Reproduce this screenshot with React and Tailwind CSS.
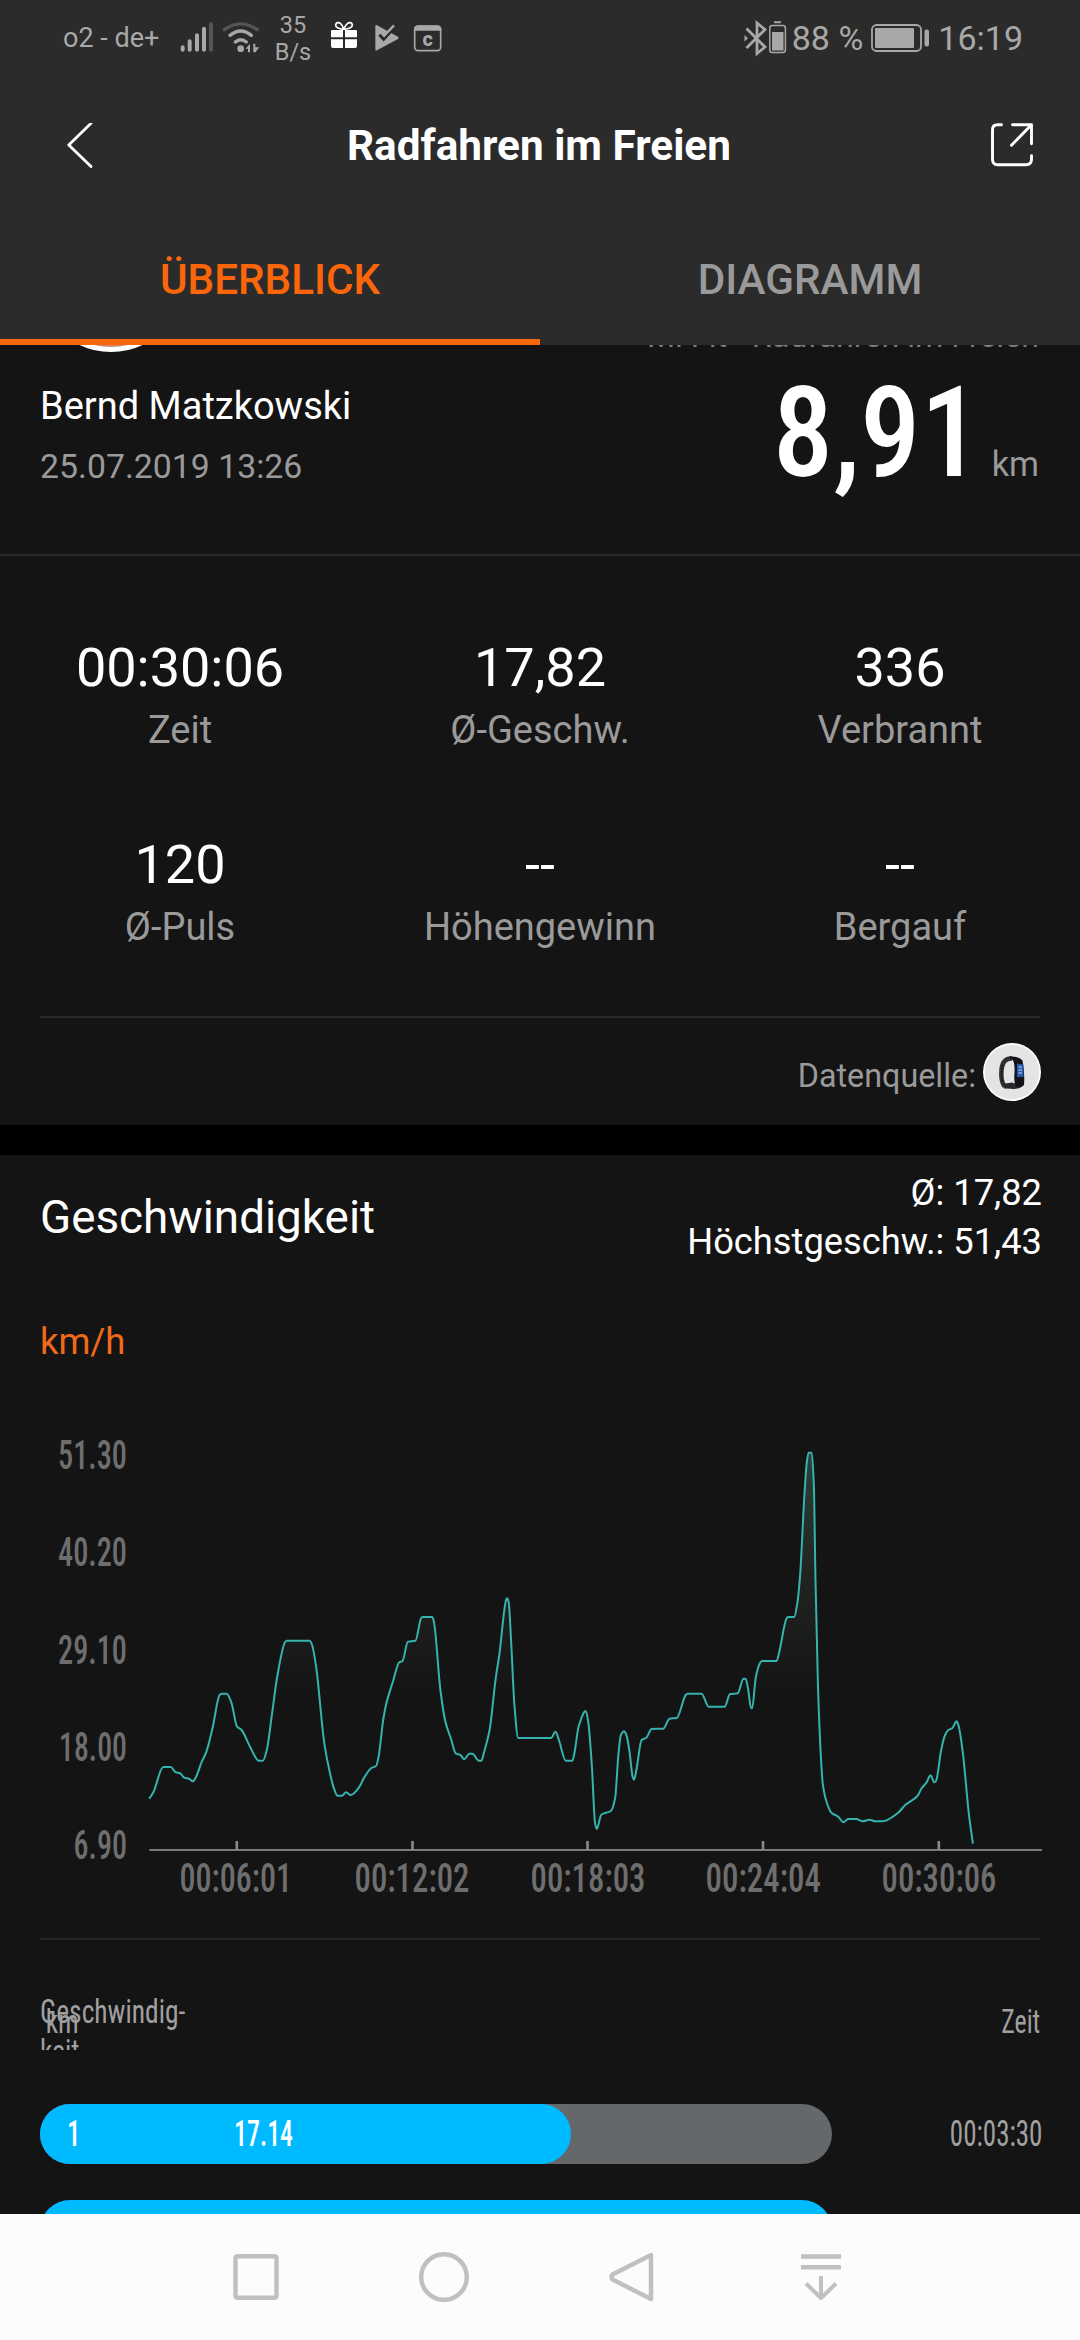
import React from "react";

const GREY = "#a8a8a8";

const SPEED_POINTS = [
  [149.3, 398.7], [153.6, 391.7], [163.2, 367], [170.7, 367], [175.7, 372.3], [180, 373.3], [184.3, 377.7], [188.9, 378.7],
  [192.9, 381.3], [195.4, 378.3], [201.8, 361.7], [206.4, 351.7], [212.5, 328.3], [219.6, 295], [221.4, 293.7], [226.8, 293.7],
  [231.4, 302.7], [237.1, 326.7], [241.4, 329.7], [250, 346.7], [258.9, 360.7], [262.9, 360.7], [266.8, 350], [272.1, 313.3],
  [277.5, 275], [285, 242.3], [286.8, 240.7], [309.6, 240.7], [312.1, 245], [316.1, 266.7], [324.3, 343.3], [329.3, 370],
  [333.9, 388.3], [337.5, 395.7], [341.8, 395.7], [346.1, 392.3], [350.7, 395], [358.9, 387.7], [364.3, 377.3], [371.4, 368],
  [376.1, 366], [378.6, 356.7], [383.2, 320], [386.4, 303.3], [392.9, 281.7], [399.3, 262.3], [402.5, 261], [407.9, 241.7],
  [415.4, 240.7], [421.1, 218.3], [422.5, 217], [432.1, 217], [433.9, 221.7], [440.4, 290], [445.4, 321.7], [451.1, 339.3],
  [455.7, 353.3], [460.4, 355], [464.3, 359.3], [469.3, 353.7], [472.5, 353.7], [478.9, 360.7], [481.4, 360.7], [483.9, 352.7],
  [489.6, 330], [495.7, 278.3], [499.3, 255], [506.1, 200], [507.1, 198.3], [508.6, 201.7], [511.4, 246.7], [514.3, 303.3],
  [518.2, 338], [551, 338], [555.5, 331.7], [558.9, 340], [565.8, 360.7], [572.4, 360.7], [574.4, 353.3], [578.6, 326.7],
  [585.8, 311], [588.2, 321.7], [591.7, 363.3], [595.1, 423.3], [596.8, 429], [601.3, 414.7], [610.9, 411], [615.1, 398.3],
  [618.5, 353.3], [620.9, 335], [624, 331.3], [626.4, 335], [629.5, 351.7], [632.6, 376.7], [634, 379.7], [636.4, 370],
  [641.6, 340], [646.4, 337.7], [651.6, 329], [663.3, 328.7], [669.5, 318.7], [676.7, 318], [685.7, 295], [687.4, 293.7],
  [701.5, 293.7], [708.7, 306.7], [724.6, 306.7], [730.1, 294], [737.7, 293.3], [743.5, 278.7], [745.6, 278.7], [748, 288.3],
  [751.1, 308.3], [752.1, 308.3], [755.9, 276.7], [760.4, 262.3], [762.1, 261], [776.6, 261], [779.3, 251.7], [786.6, 218.3],
  [788, 217], [794.2, 217], [797.3, 203.3], [800, 176.7], [804.5, 93.3], [806.9, 61.7], [808.6, 52.7], [811.7, 52.7],
  [813.8, 83.3], [815.5, 180], [817.9, 283.3], [820.7, 353.3], [822.7, 383.3], [826.5, 401.7], [831.4, 412.7], [838.2, 416.7],
  [843.4, 422.3], [848.2, 419], [856.1, 419], [862.7, 421.3], [869.6, 419.7], [875.1, 421.3], [882.7, 421.3], [898.2, 412.7],
  [905, 405.3], [917.5, 396], [921.6, 388.3], [926.4, 382.7], [930.5, 375.3], [934.3, 382.3], [936, 381], [941.2, 350],
  [944.7, 336], [948.4, 330], [952.2, 328.3], [956.7, 321.3], [958.8, 326.7], [962.9, 353.3], [968.8, 413.3], [972.9, 443.7],
];

// Monotone cubic interpolation through the samples.
function smoothPath(p) {
  const n = p.length;
  const s = [];
  for (let i = 0; i < n - 1; i++) s.push((p[i + 1][1] - p[i][1]) / (p[i + 1][0] - p[i][0]));
  const m = p.map((_, i) => {
    if (i === 0) return s[0];
    if (i === n - 1) return s[n - 2];
    if (s[i - 1] * s[i] <= 0) return 0;
    return (2 * s[i - 1] * s[i]) / (s[i - 1] + s[i]);
  });
  let d = `M${p[0][0]} ${p[0][1]}`;
  for (let i = 0; i < n - 1; i++) {
    const h = (p[i + 1][0] - p[i][0]) / 3;
    d += `C${p[i][0] + h} ${p[i][1] + m[i] * h} ${p[i + 1][0] - h} ${p[i + 1][1] - m[i + 1] * h} ${p[i + 1][0]} ${p[i + 1][1]}`;
  }
  return d;
}

const Y_LABELS = [["51.30", 69, 59], ["40.20", 165.7, 59], ["29.10", 264, 59], ["18.00", 360.7, 60], ["6.90", 459, 74.5]];
const X_TICKS = [
  ["00:06:01", 236.8, 180.5, 110.5],
  ["00:12:02", 412.5, 355.5, 113],
  ["00:18:03", 587.5, 531.5, 113],
  ["00:24:04", 763, 706.5, 113.5],
  ["00:30:06", 938.8, 882.5, 113],
];

function SpeedChart() {
  const line = smoothPath(SPEED_POINTS);
  return (
    <svg className="block h-[520px] w-[1080px] shrink-0" viewBox="0 0 1080 520">
      <defs>
        <linearGradient id="speedFill" gradientUnits="userSpaceOnUse" x1="0" y1="50" x2="0" y2="300">
          <stop offset="0" stopColor="#4f8f80" stopOpacity="0.38" />
          <stop offset="0.5" stopColor="#5a7060" stopOpacity="0.18" />
          <stop offset="1" stopColor="#5a6058" stopOpacity="0" />
        </linearGradient>
      </defs>
      <path d={`${line}L972.9 449L149.3 449Z`} fill="url(#speedFill)" />
      <path d={line} fill="none" stroke="#35b3ae" strokeWidth="2" strokeLinejoin="round" />
      <path d="M149.3 450H1042" stroke="#7a7a7a" strokeWidth="2" />
      {X_TICKS.map(([t, x]) => (
        <path key={t} d={`M${x} 441V450`} stroke="#8a8a8a" strokeWidth="2.6" />
      ))}
      <g fill="#6e6e6e" fontSize="41" className="font-[Roboto,sans-serif] font-medium [font-stretch:75%]">
        {Y_LABELS.map(([t, y, x]) => (
          <text key={t} x={x - 1} y={y} textLength={128 - x} lengthAdjust="spacingAndGlyphs">{t}</text>
        ))}
        {X_TICKS.map(([t, , x, w]) => (
          <text key={t} x={x - 1} y="491.5" textLength={w + 2} lengthAdjust="spacingAndGlyphs">{t}</text>
        ))}
      </g>
    </svg>
  );
}

function StatusBar() {
  return (
    <div className="flex h-[76px] items-center pl-[63px] text-[#a8a8a8]">
      <span className="w-[107px] whitespace-nowrap text-[27px]">o2 - de+</span>
      <svg className="h-[60px] w-[90px] shrink-0" viewBox="0 0 270 180" transform="translate(0 2)">
        <g stroke={GREY} strokeWidth="12" strokeLinecap="round">
          <path d="M38 112V119M59 94V119M81 76V119M102 56V119" />
          <path d="M123 42V119" stroke="#555" />
        </g>
        <g fill="none" strokeWidth="10" strokeLinecap="round">
          <path d="M163 59Q212 24 262 59" stroke="#555" />
          <path d="M180 76Q212 50 244 76M196 96Q212 82 229 96" stroke={GREY} />
        </g>
        <circle cx="212" cy="116" r="10" fill={GREY} />
        <path d="M227 116L240 101V127H234V116ZM250 101V127H256L268 112L256 112V101Z" fill={GREY} />
      </svg>
      <div className="w-[66px] pt-px text-center text-[23.5px] leading-[27px]">
        <div>35</div>
        <div>B/s</div>
      </div>
      <svg className="h-[60px] w-[120px] shrink-0" viewBox="468 0 360 180" transform="translate(0 2)">
        <g fill="#fff">
          <path d="M483 64q0-4 4-4H519V82H483ZM525 60H557q4 0 4 4V82H525ZM483 88H519V114H489q-6 0-6-6ZM525 88H561V108q0 6-6 6H525Z" />
          <path d="M521 58Q496 56 497 44Q501 34 511 40Q519 46 521 58Q525 46 533 40Q543 34 547 44Q548 56 521 58" fill="none" stroke="#fff" strokeWidth="5" />
        </g>
        <path d="M616 48Q616 44 621 46L684 80Q688 84 684 87L621 121Q616 124 616 118Z" fill={GREY} />
        <path d="M628 74L641 88L668 58" fill="none" stroke="#2b2b2b" strokeWidth="9" />
        <path d="M640 80L672 46" stroke={GREY} strokeWidth="7" />
        <rect x="734" y="49" width="78" height="73" rx="10" fill="none" stroke={GREY} strokeWidth="5" />
        <path d="M732 62V56Q734 46 744 46H802Q812 46 814 56V62Z" fill={GREY} />
        <text x="773" y="107" textAnchor="middle" fontSize="60" fontWeight="800" fill={GREY} className="font-[Roboto,sans-serif]">c</text>
      </svg>
      <svg className="ml-auto h-[40px] w-[50px] shrink-0" viewBox="0 0 50 40">
        <path d="M5.5 10.5L24 29L16 35.5V5L24 11.5L5.5 30" fill="none" stroke={GREY} strokeWidth="2.8" />
        <path d="M3.5 17L7 20.3L3.5 23.5Z" fill={GREY} />
        <rect x="28.8" y="7.6" width="15.6" height="27" rx="2.5" fill="none" stroke={GREY} strokeWidth="1.5" />
        <path d="M33 4.2H40" stroke={GREY} strokeWidth="2" />
        <path d="M31 14H42.5V32.5H31Z" fill={GREY} />
      </svg>
      <span className="ml-[1px] whitespace-nowrap text-[34px] leading-[76px]">88 %</span>
      <svg className="ml-[6px] h-[30px] w-[62px] shrink-0" viewBox="0 0 62 30">
        <rect x="3" y="2" width="49" height="26" rx="4.5" fill="none" stroke={GREY} strokeWidth="1.8" />
        <rect x="6" y="5" width="39" height="20" rx="1" fill={GREY} />
        <rect x="55.5" y="6.5" width="4.5" height="17" rx="2" fill={GREY} />
      </svg>
      <span className="mr-[57px] ml-[7px] whitespace-nowrap text-[34px] leading-[76px]">16:19</span>
    </div>
  );
}

function Header() {
  return (
    <header className="h-[345px] shrink-0 bg-[#2b2b2b]">
      <StatusBar />
      <div className="flex h-[140px] items-center pr-[45px] pl-[66px]">
        <svg className="h-[46px] w-[44px]" viewBox="0 0 44 46">
          <path d="M25 0.3L2.8 22.1L25 43.6" fill="none" stroke="#fff" strokeWidth="2.8" strokeLinecap="round" strokeLinejoin="round" />
        </svg>
        <h1 className="ml-[237px] text-[42.3px] font-bold whitespace-nowrap text-white">Radfahren im Freien</h1>
        <svg className="ml-auto h-[46px] w-[44px]" viewBox="0 0 44 46">
          <path d="M10.5 1.7H6.5Q1.5 1.7 1.5 6.7V36.2Q1.5 41.7 6.5 41.7H35Q40.5 41.7 40.5 36.2V32.7M21.5 1.7H40.5V20.7M40 2.2L20.5 22.2" fill="none" stroke="#fff" strokeWidth="2.9" strokeLinecap="round" strokeLinejoin="round" />
        </svg>
      </div>
      <div className="grid h-[129px] grid-cols-2 text-center text-[42.2px] leading-[119px] font-medium">
        <div className="border-b-[6px] border-[#fb660b] pt-1 text-[#fb660b]">ÜBERBLICK</div>
        <div className="pt-1 text-[#9a9a9a]">DIAGRAMM</div>
      </div>
    </header>
  );
}

function Summary() {
  return (
    <section className="relative flex h-[211px] shrink-0 justify-between overflow-hidden border-b-2 border-[#292929] pr-[41px] pl-[40px]">
      <div className="absolute top-[-137px] left-[39px] size-[144px] rounded-full border-[5px] border-white bg-[#c98a78]" />
      <div className="absolute top-[-28px] right-[41px] text-[32.2px] leading-[38px] whitespace-nowrap text-[#7c7c7c]">Mi Fit - Radfahren im Freien</div>
      <div className="pt-[31px]">
        <div className="text-[38px] leading-[60px] text-white">Bernd Matzkowski</div>
        <div className="mt-[1px] text-[33.8px] leading-[60px] text-[#9a9a9a]">25.07.2019 13:26</div>
      </div>
      <div className="flex items-baseline pt-[18px] whitespace-nowrap">
        <span className="origin-right scale-x-[0.96] text-[126px] leading-[140px] font-medium text-white [font-stretch:75%]">8,91</span>
        <span className="ml-[11px] text-[34.2px] text-[#9a9a9a]">km</span>
      </div>
    </section>
  );
}

const STATS = [
  ["00:30:06", "Zeit"],
  ["17,82", "Ø-Geschw."],
  ["336", "Verbrannt"],
  ["120", "Ø-Puls"],
  ["--", "Höhengewinn"],
  ["--", "Bergauf"],
];

function Stats() {
  return (
    <section className="h-[569px] shrink-0 pt-[82px]">
      <div className="grid grid-cols-3 text-center">
        {STATS.map(([value, label]) => (
          <div key={label} className="h-[197px]">
            <div className="text-[54px] leading-[60px] text-white">{value}</div>
            <div className="mt-[7px] text-[38px] leading-[50px] text-[#9a9a9a]">{label}</div>
          </div>
        ))}
      </div>
      <div className="mx-[40px] mt-[-16px] flex h-[109px] items-center justify-end border-t-2 border-[#292929]">
        <span className="mt-[9px] mr-[7px] text-[32.3px] text-[#9a9a9a]">Datenquelle:</span>
        <svg className="-mr-px size-[58px]" viewBox="0 0 58 58">
          <circle cx="29" cy="29" r="29" fill="#fff" />
          <circle cx="29" cy="29" r="27.3" fill="#e4e4e4" />
          <path d="M29 15.5Q19.5 15 18.5 27Q17.5 38 21.5 43.5" fill="none" stroke="#2d2f31" strokeWidth="4.5" />
          <path d="M19.5 41L29 39.5L36 42L39.5 43.5Q35 46.8 28 45.8L21 45.5Z" fill="#26282a" />
          <path d="M26 13.5Q36 13 39.5 17.5Q42 30 41 42Q38 45 33.5 44Q30.5 40 31.5 30Q32 21 30 17.5Z" fill="#121417" />
          <path d="M34 20.5L40.3 21.5Q41 28 40.4 34L34 34Z" fill="#2a58a8" />
          <path d="M35.5 24H39M35.5 27H39M35.5 30H39" stroke="#7db4ec" strokeWidth="1.3" />
          <path d="M19.5 22Q18 30 19.5 38" stroke="#0e0e0e" strokeWidth="1.2" strokeDasharray="1.5 1.5" fill="none" />
        </svg>
      </div>
    </section>
  );
}

function SpeedSection() {
  return (
    <section className="shrink-0">
      <div className="flex h-[135px] justify-between pr-[38px] pl-[40px] whitespace-nowrap text-white">
        <h2 className="pt-[33px] text-[45.8px] leading-[60px]">Geschwindigkeit</h2>
        <div className="pt-[13px] text-right text-[36.3px] leading-[49px]">
          <div>Ø: 17,82</div>
          <div>Höchstgeschw.: 51,43</div>
        </div>
      </div>
      <div className="h-[110px] pt-[26.5px] pl-[40px] text-[36.4px] leading-[50px] text-[#f06a1a]">km/h</div>
      <SpeedChart />
    </section>
  );
}

function Laps() {
  return (
    <section className="mt-[18px] h-[276px] shrink-0 overflow-hidden px-[40px] text-[34px] text-[#a0a0a0] [font-stretch:75%]">
      <div className="h-[2px] bg-[#262626]" />
      <div className="mt-[51px] flex h-[59px] justify-between overflow-hidden">
        <div className="relative w-[200px] origin-left scale-x-[0.808] leading-[40px]">
          <div>Geschwindig-<br />keit</div>
          <div className="absolute top-[10px] left-[7px]">km</div>
        </div>
        <div className="origin-right scale-x-[0.76] pt-[9.5px] leading-[40px]">Zeit</div>
      </div>
      <div className="mt-[54px] flex h-[60px] items-center justify-between">
        <div className="h-[60px] w-[792px] rounded-full bg-[#65686b]">
          <div className="flex h-[60px] w-[531px] items-center rounded-full bg-[#00baff] text-[36px] leading-[62px] font-medium text-white">
            <span className="ml-[27px] w-[167px] origin-left scale-x-[0.75]">1</span>
            <span className="origin-left scale-x-[0.72]">17.14</span>
          </div>
        </div>
        <span className="-mr-[2px] origin-right scale-x-[0.75] text-[36px] leading-[63px]">00:03:30</span>
      </div>
      <div className="mt-[36px] h-[60px] w-[792px] rounded-full bg-[#00baff]" />
    </section>
  );
}

function NavBar() {
  return (
    <nav className="flex h-[126px] shrink-0 items-center bg-[#fcfcfc]">
      <svg className="block h-[126px] w-[1080px]" viewBox="0 0 1080 126" fill="none" stroke="#c0c0c0" strokeWidth="4.5" strokeLinejoin="round">
        <rect x="235.5" y="42.3" width="41" height="41.5" rx="2" />
        <circle cx="444" cy="63" r="22.8" />
        <path d="M651 41V85L612.5 65.5Q610.5 63 612.5 60.5Z" />
        <path d="M801 42.5H841M801 53.3H841" />
        <path d="M821 62V84M806 69.5L821 84L836 69.5" strokeWidth="4" />
      </svg>
    </nav>
  );
}

export default function App() {
  return (
    <div className="flex h-[2340px] w-[1080px] flex-col overflow-hidden bg-[#141414] font-[Roboto,sans-serif]">
      <Header />
      <Summary />
      <Stats />
      <div className="h-[30px] shrink-0 bg-black" />
      <SpeedSection />
      <Laps />
      <NavBar />
    </div>
  );
}
